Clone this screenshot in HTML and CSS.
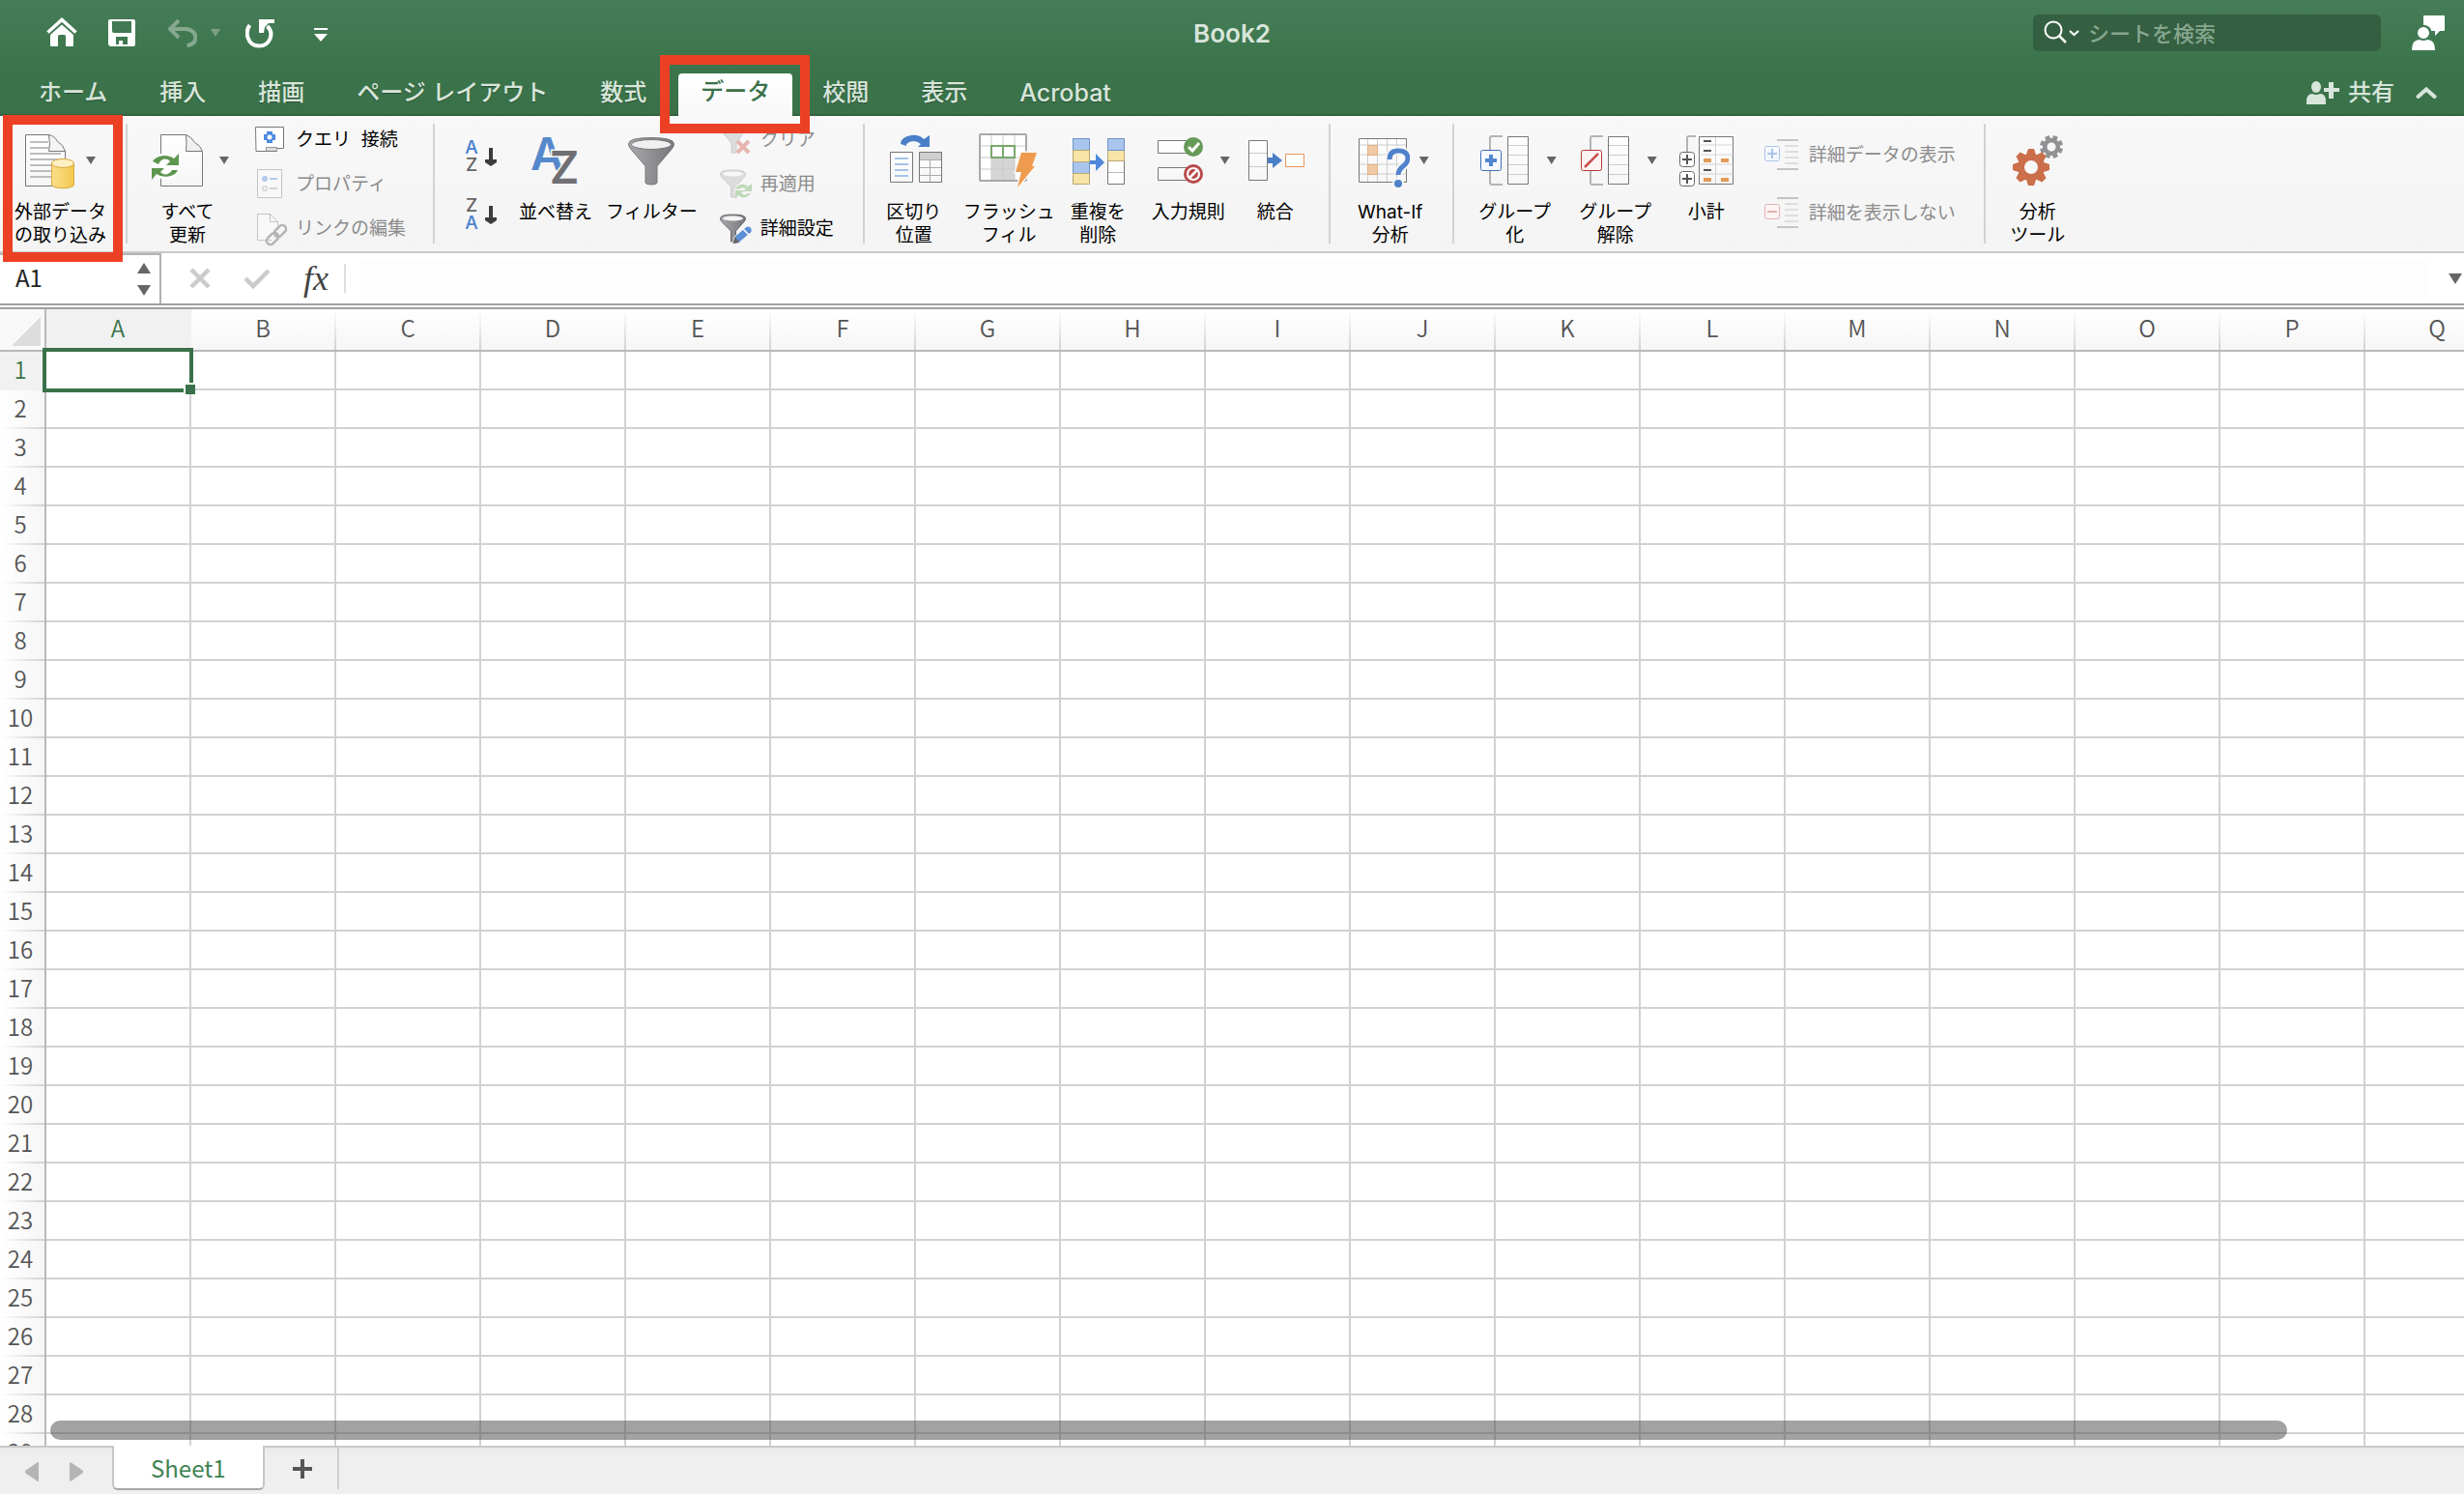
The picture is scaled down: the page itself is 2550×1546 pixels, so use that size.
FILE: index.html
```html
<!DOCTYPE html>
<html lang="ja">
<head>
<meta charset="utf-8">
<title>Book2</title>
<link rel="stylesheet" href="styles.css">
</head>
<body>
<svg class="defs" aria-hidden="true">
  <defs>
    <linearGradient id="paper" x1="0" y1="0" x2="0" y2="1"><stop offset="0" stop-color="#fff"/><stop offset="1" stop-color="#f6f6f6"/></linearGradient>
    <linearGradient id="gold" x1="0" y1="0" x2="1" y2="0"><stop offset="0" stop-color="#fbe08a"/><stop offset="1" stop-color="#f3c74f"/></linearGradient>
    <linearGradient id="metal" x1="0" y1="0" x2="1" y2="0"><stop offset="0" stop-color="#a9a9ad"/><stop offset="1" stop-color="#77777b"/></linearGradient>
  </defs>
</svg>

<header class="header">
  <div class="titlebar">
    <div class="quick">
      <button class="qbtn" aria-label="ホーム"><svg width="32" height="36" viewBox="48 16 32 36"><path d="M49.500 33.500 64 20.500l14.500 13" fill="none" stroke="#fff" stroke-width="3.600"/><path d="M64 25.500 76 36v11q0 1-1 1h-7V37.500q0-1.500-1.500-1.500h-5q-1.500 0-1.500 1.500V48h-7q-1 0-1-1V36z" fill="#fff"/></svg></button>
      <button class="qbtn m32" aria-label="保存"><svg width="28" height="36" viewBox="112 16 28 36"><path fill-rule="evenodd" fill="#fff" d="M114 20h24q2 0 2 2v24q0 2-2 2h-24l-2-2V22q0-2 2-2zm2 2v10q0 2 2 2h18V22zm4 16v8h3v-4h4v4h5v-8z"/></svg></button>
      <button class="qbtn m34" aria-label="元に戻す"><svg width="30" height="36" viewBox="174 16 30 36"><path d="M185 21 176 30l9 9M177 30h15q10 1 10.500 9-.5 7-9 8" fill="none" stroke="#86a88f" stroke-width="4"/></svg></button>
      <button class="qbtn m14" aria-label="元に戻すの一覧"><svg width="10" height="8" viewBox="0 0 10 8"><path d="M0 0h10L5 8z" fill="#7ba087"/></svg></button>
      <button class="qbtn m26" aria-label="やり直し"><svg width="32" height="36" viewBox="254 16 32 36"><path d="M258.500 26C253 33 256 47.500 268 47.500S284 34 276.500 27" fill="none" stroke="#fff" stroke-width="4"/><path d="M268 20h16v4h-6l-4 4-1 6h-5z" fill="#fff"/></svg></button>
      <button class="qbtn m38" aria-label="ツールバーのカスタマイズ"><svg width="16" height="36" viewBox="324 16 16 36"><path d="M325 29h14v2h-14zm0 6h14l-7 8z" fill="#fff"/></svg></button>
    </div>
    <h1 class="title">Book2</h1>
    <div class="title-right">
      <label class="search">
        <svg width="38" height="28" viewBox="2115 20 38 28"><circle cx="2125" cy="31" r="8.500" fill="none" stroke="#fff" stroke-width="2"/><path d="m2131 37 7 7" stroke="#fff" stroke-width="2.500"/><path d="m2142 32 4.500 4 4.500-4" fill="none" stroke="#fff" stroke-width="2.200"/></svg>
        <input type="search" placeholder="シートを検索" aria-label="シートを検索">
      </label>
      <button class="qbtn" aria-label="フィードバック"><svg width="34" height="36" viewBox="2496 16 34 36"><path d="M2509 16h20q1 0 1 1v14q0 1-1 1h-4l-5 5v-5h-4q0-5-8-6v-9q0-1 1-1z" fill="#fff"/><circle cx="2508" cy="34" r="7" fill="#fff" stroke="#417853" stroke-width="2"/><path d="M2496 52q0-11 8-11 4 2 8 0 8 0 8 11z" fill="#fff"/></svg></button>
    </div>
  </div>
  <nav class="tabs">
    <button class="tab">ホーム</button>
    <button class="tab">挿入</button>
    <button class="tab">描画</button>
    <button class="tab">ページ レイアウト</button>
    <button class="tab">数式</button>
    <span class="marked"><button class="tab active" aria-current="page">データ</button><i class="mark mark-tab"></i></span>
    <button class="tab">校閲</button>
    <button class="tab">表示</button>
    <button class="tab latin">Acrobat</button>
    <div class="tabs-right">
      <button class="share"><svg width="34" height="26" viewBox="2389 82 34 26"><ellipse cx="2399" cy="89" rx="5" ry="6" fill="#d8e5db"/><path d="M2389 107v-3q0-8 6-8 4 2 8 0 6 0 6 8v3zM2412 84h5v6h6v4h-6v7h-5v-7h-5v-4h5z" fill="#d8e5db"/></svg>共有</button>
      <button class="qbtn" aria-label="リボンを折りたたむ"><svg width="22" height="14" viewBox="0 0 22 14"><path d="m2.500 11 8.500-7.500 8.500 7.500" fill="none" stroke="#d8e5db" stroke-width="4" stroke-linecap="round"/></svg></button>
    </div>
  </nav>
</header>

<section class="ribbon" aria-label="データ">
  <div class="group g-import">
    <button class="big">
      <span class="pic"><svg width="53" height="60" viewBox="27 136 53 60"><path d="M27.500 139.500h24l17 17v36h-41z" fill="url(#paper)" stroke="#777"/><path d="M32 147h19m-19 6h19m-19 6h32m-32 6h32m-32 6h22m-22 6h22m-22 6h22" stroke="#bdbdbd" stroke-width="2"/><path d="M51.500 139.500q2 10 0 17h17q-2-7-8-10-3-6-9-7z" fill="#f4f4f4" stroke="#777"/><path d="M54.500 169v22c0 5 23 5 23 0v-22z" fill="url(#gold)" stroke="#d9a83a"/><ellipse cx="66" cy="169" rx="11.500" ry="4.500" fill="#fdf0c4" stroke="#d9a83a"/></svg><i class="caret"></i></span>
      <span>外部データ<br>の取り込み</span>
    </button>
    <i class="mark mark-import"></i>
  </div>

  <div class="group g-refresh">
    <button class="big">
      <span class="pic"><svg width="66" height="60" viewBox="151 136 66 60"><path d="M166.500 139.500h26l17 18v35h-43z" fill="url(#paper)" stroke="#777"/><path d="M192.500 139.500q1 9 0 17h17q-2-6-8-9-3-6-9-8z" fill="#f0f0f0" stroke="#777"/><circle cx="172" cy="172" r="14" fill="#fff"/><path d="M158 167a13 9 0 0 1 22-3l5-5v12h-13l4-4c-4-4-9-3-12 3zM184 176a13 9 0 0 1-22 4l-5 6v-12h13l-4 4c4 4 9 3 12-2z" fill="#5f9650"/></svg><i class="caret"></i></span>
      <span>すべて<br>更新</span>
    </button>
    <div class="col three m27">
      <button class="small"><svg width="33" height="46" viewBox="264 122 33 46"><path d="M264.500 131.500h29v22h-7v3h-21.500z" fill="#fff" stroke="#777"/><path d="M275.500 156v-3.500h11V156" fill="#ddd" stroke="#999"/><path d="M276 136h6v3h3v6h-3v3h-6v-3h-3v-6h3z" fill="#4f8ae0"/><circle cx="279" cy="142" r="2.500" fill="#fff"/></svg>クエリ&nbsp; 接続</button>
      <button class="small" disabled><svg width="33" height="46" viewBox="264 168 33 46"><path d="M266.500 175.500h25v29h-25z" fill="#f8f8f8" stroke="#c4c4c4"/><circle cx="274" cy="185" r="3" fill="#b3c9ea"/><path d="M279 185h8" stroke="#b3c9ea" stroke-width="2"/><circle cx="274" cy="195" r="2.200" fill="none" stroke="#d3d3d3" stroke-width="1.500"/><path d="M279 195h8" stroke="#d3d3d3" stroke-width="2"/></svg>プロパティ</button>
      <button class="small" disabled><svg width="33" height="46" viewBox="264 214 33 46"><path d="M281 248.500h-14.500v-27h13l8 8v4" fill="#f8f8f8" stroke="#c4c4c4"/><path d="M279.500 221.500v8h8" fill="none" stroke="#c4c4c4"/><g fill="none" stroke="#b4b4b4" stroke-width="2.500"><rect x="-7" y="-4" width="14" height="8" rx="4" transform="translate(290 239) rotate(-45)"/><rect x="-7" y="-4" width="14" height="8" rx="4" transform="translate(282 247) rotate(-45)"/></g></svg>リンクの編集</button>
    </div>
  </div>

  <div class="group g-sort">
    <div class="col two">
      <button class="icon-only" aria-label="昇順"><svg width="32" height="60" viewBox="482 130 32 60"><text x="488" y="158" class="az-s blue">A</text><text x="488" y="176" class="az-s">Z</text><path d="M506 152h4v12h4v3l-6 4-6-4v-3h4z" fill="#3c3c3c"/></svg></button>
      <button class="icon-only" aria-label="降順"><svg width="32" height="60" viewBox="482 190 32 60"><text x="488" y="218" class="az-s">Z</text><text x="488" y="236" class="az-s blue">A</text><path d="M506 212h4v12h4v3l-6 4-6-4v-3h4z" fill="#3c3c3c"/></svg></button>
    </div>
    <button class="big m23"><span class="pic"><svg width="54" height="60" viewBox="548 136 54 60"><text x="566" y="176" class="az-l blue" text-anchor="middle">A</text><text x="584" y="190" class="az-l halo" text-anchor="middle">Z</text></svg></span><span>並べ替え</span></button>
    <button class="big m14"><span class="pic"><svg width="50" height="60" viewBox="649 136 50 60"><path d="M650.500 149q0-6.500 23.500-6.500t23.500 6.500q0 3-3 6L680 172v17q0 2-6 2t-6-2v-17l-14.500-17q-3-3-3-6z" fill="url(#metal)" stroke="#77777b"/><ellipse cx="674" cy="149.500" rx="20.500" ry="5" fill="#f0f0f0" stroke="#77777b"/></svg></span><span>フィルター</span></button>
    <div class="col three m23">
      <button class="small" disabled><svg width="33" height="46" viewBox="745 122 33 46"><path d="M746 135q0-4 12.500-4t12.500 4l-9 13v10h-5v-10z" fill="#dcdcdc" stroke="#ccc"/><path d="m763 146 12 12m0-12-12 12" stroke="#e6b4b0" stroke-width="4"/></svg>クリア</button>
      <button class="small" disabled><svg width="33" height="46" viewBox="745 168 33 46"><path d="M745.500 180q0-4 13-4t13 4q0 2-2 4l-8 9v11h-5v-11l-9-9q-2-2-2-4z" fill="#dcdcdc" stroke="#ccc"/><ellipse cx="758.500" cy="180" rx="10.500" ry="2.500" fill="#f8f8f8"/><circle cx="769" cy="198" r="9" fill="#f5f5f5"/><path d="M761 195q7-8 13-2l4-3v8h-9l3-3q-4-2-8 1zM777 200q-7 8-13 2l-3 4v-9h9l-3 3q4 3 7 0z" fill="#c0d8b9"/></svg>再適用</button>
      <button class="small"><svg width="33" height="46" viewBox="745 214 33 46"><path d="M745.500 226q0-4 13-4t13 4q0 2-2 4l-8 9v11h-5v-11l-9-9q-2-2-2-4z" fill="url(#metal)" stroke="#68686c"/><ellipse cx="758.500" cy="226" rx="10.500" ry="2.500" fill="#f4f4f4"/><path d="m758 253 2-8 13-11q6 0 5 6l-13 11z" fill="#5b8fd6" stroke="#f5f5f5" stroke-width="1"/><path d="m758.500 252 2-7 5 6z" fill="#666"/><path d="m769 237 6 6" stroke="#fff" stroke-width="1.500"/></svg>詳細設定</button>
    </div>
  </div>

  <div class="group g-tools">
    <button class="big"><span class="pic"><svg width="58" height="60" viewBox="916 136 58 60"><path d="M931 149q0-7 11-9 8-1 13 4l6-4v12h-12l3-3q-8-6-15 0v2z" fill="#4a7fc8"/><path d="M920.500 157.500h23v31h-23z" fill="url(#paper)" stroke="#777"/><path d="M925 164h14m-14 6h14m-14 6h14m-14 6h14" stroke="#a4c3ea" stroke-width="2"/><path d="M950.500 157.500h23v31h-23z" fill="url(#paper)"/><path d="M950 157h24v8h-24z" fill="#cfcfd1"/><path d="M950.500 165.500h23m-23 8h23m-23 8h23m-12-16v23" stroke="#aaa"/><path d="M950.500 157.500h23v31h-23z" fill="none" stroke="#777"/></svg></span><span>区切り<br>位置</span></button>
    <button class="big m22"><span class="pic"><svg width="62" height="60" viewBox="1013 136 62 60"><path d="M1014 139h48v48h-48z" fill="#fff"/><path d="M1026 162h24v24h-24z" fill="#d5d5d5"/><path d="M1026 139v48m12-48v48m12-48v48m-36-36h48m-48 12h48m-48 12h48" stroke="#c8c8c8"/><rect x="1014" y="139" width="48" height="48" rx="1" fill="none" stroke="#a8a8a8" stroke-width="2"/><path d="M1026 151h24v12h-24zm12 0v12" fill="#fff" stroke="#7aa66c" stroke-width="2"/><path d="m1057 158h16l-5 14h3l-18 22 4-16h-6z" fill="#ef9b4e" stroke="#f7f7f7" stroke-width="3" paint-order="stroke"/></svg></span><span>フラッシュ<br>フィル</span></button>
    <button class="big m16"><span class="pic"><svg width="57" height="60" viewBox="1107 136 57 60"><path d="M1109.500 143.500h17v47h-17z" fill="#f7e4a6"/><path d="M1109.500 143.500h17v12h-17zm0 24h17v12h-17z" fill="#a9c5ee" stroke="#6d92c8"/><path d="M1109.500 155.500h17v12h-17zm0 24h17v11h-17z" fill="none" stroke="#b7a871"/><path d="M1145.500 143.500h17v47h-17z" fill="#fff" stroke="#777"/><path d="M1145.500 155.500h17v11h-17z" fill="#f7e4a6" stroke="#b7a871"/><path d="M1145.500 143.500h17v12h-17z" fill="#a9c5ee" stroke="#6d92c8"/><path d="M1146 178.500h16" stroke="#bbb"/><path d="M1127 166h6v-7l9 9-9 9v-7h-6z" fill="#4f88da"/></svg></span><span>重複を<br>削除</span></button>
    <button class="big m22"><span class="pic"><svg width="66" height="60" viewBox="1186 136 66 60"><path d="M1197.500 145.500h32v13h-32zm0 28h32v13h-32z" fill="url(#paper)" stroke="#777"/><circle cx="1234" cy="152" r="10" fill="#659a57"/><path d="m1229 152 4 4 7-8" fill="none" stroke="#fff" stroke-width="3"/><circle cx="1234" cy="180" r="10" fill="#b84a4a"/><circle cx="1234" cy="180" r="6" fill="none" stroke="#fff" stroke-width="2.200"/><path d="m1230 184 8-8" stroke="#fff" stroke-width="2.500"/></svg><i class="caret"></i></span><span>入力規則</span></button>
    <button class="big m17"><span class="pic"><svg width="60" height="60" viewBox="1289 136 60 60"><path d="M1291.500 145.500h19v41h-19z" fill="url(#paper)" stroke="#777"/><path d="M1292 158.500h18m-18 14h18" stroke="#ccc"/><path d="M1311 163h5v-5l10 8-10 8v-5h-5z" fill="#4a7fc8"/><path d="M1329.500 159.500h19v13h-19z" fill="#fff" stroke="#e8955a"/></svg></span><span>統合</span></button>
  </div>

  <div class="group g-whatif">
    <button class="big"><span class="pic"><svg width="60" height="60" viewBox="1398 136 60 60"><path d="M1405.500 143.500h49v45h-49z" fill="url(#paper)"/><path d="M1414.500 144v44m10-44v44m10-44v44m10-44v44m-39-38h49m-49 10h49m-49 10h49m-49 10h49" stroke="#ccc"/><path d="M1414.500 150.500h10v10h-10zm0 20h10v10h-10z" fill="#f0caa6" stroke="#e0b083"/><path d="M1405.500 143.500h49v45h-49z" fill="none" stroke="#777"/><path d="M1437 165q0-9 9-9 10 0 10 8 0 4-5 8t-5 9" fill="none" stroke="#f7f7f7" stroke-width="9"/><circle cx="1446" cy="190" r="6" fill="#f7f7f7"/><path d="M1437 165q0-9 9-9 10 0 10 8 0 4-5 8t-5 9" fill="none" stroke="#4f82cb" stroke-width="5"/><circle cx="1446" cy="190" r="4" fill="#4f82cb"/></svg><i class="caret"></i></span><span class="latin-label">What-If<br>分析</span></button>
  </div>

  <div class="group g-outline">
    <button class="big"><span class="pic"><svg width="66" height="60" viewBox="1524 136 66 60"><path d="M1554 141h-11q-2 0-2 2v46q0 2 2 2h11" fill="none" stroke="#b4b4b4" stroke-width="2"/><path d="M1559.500 141.500h21v49h-21z" fill="url(#paper)" stroke="#777"/><path d="M1560 150.500h20m-20 10h20m-20 10h20m-20 10h20" stroke="#ccc"/><rect x="1531.500" y="155.500" width="21" height="21" rx="2" fill="#f5f9ff" stroke="#3e70b8"/><path d="M1542 160v12m-6-6h12" stroke="#5286cf" stroke-width="4"/></svg><i class="caret"></i></span><span>グループ<br>化</span></button>
    <button class="big m18"><span class="pic"><svg width="66" height="60" viewBox="1628 136 66 60"><path d="M1658 141h-11q-2 0-2 2v46q0 2 2 2h11" fill="none" stroke="#b4b4b4" stroke-width="2"/><path d="M1663.500 141.500h21v49h-21z" fill="url(#paper)" stroke="#777"/><path d="M1664 150.500h20m-20 10h20m-20 10h20m-20 10h20" stroke="#ccc"/><rect x="1635.500" y="155.500" width="21" height="21" rx="2" fill="#fdf3f3" stroke="#b33a3a"/><path d="m1639 173 14-14" stroke="#c65252" stroke-width="2.500"/></svg><i class="caret"></i></span><span>グループ<br>解除</span></button>
    <button class="big m22"><span class="pic"><svg width="58" height="60" viewBox="1736 136 58 60"><path d="M1754 141h-7q-2 0-2 2v14" fill="none" stroke="#b4b4b4" stroke-width="2"/><path d="M1757.500 141.500h35v49h-35z" fill="url(#paper)" stroke="#777"/><path d="M1774.500 142v48m-17-40h35m-35 10h35m-35 10h35m-35 10h35" stroke="#d4d4d4"/><path d="M1762 146h8m-8 10h8m-8 20h8" stroke="#555" stroke-width="2"/><path d="M1762 166h8m10 0h8m-26 20h8m10 0h8" stroke="#e39a58" stroke-width="4"/><g fill="#fff" stroke="#666"><rect x="1737.500" y="157.500" width="15" height="15" rx="3"/><rect x="1737.500" y="177.500" width="15" height="15" rx="3"/></g><path d="M1745 160v10m-5-5h10m-5 15v10m-5-5h10" stroke="#555" stroke-width="2"/></svg></span><span>小計</span></button>
    <div class="col two m31">
      <button class="small wide" disabled><svg width="35" height="60" viewBox="1825 131 35 60"><path d="M1838 145h22m-22 30h22" stroke="#c4c4c4" stroke-width="2"/><path d="M1846 151h14m-14 6h14m-14 6h14m-14 6h14" stroke="#dedede" stroke-width="2"/><rect x="1825.500" y="151.500" width="15" height="15" rx="2" fill="#f4f8fd" stroke="#a9c4ea"/><path d="M1833 154v10m-5-5h10" stroke="#a9c4ea" stroke-width="2"/></svg>詳細データの表示</button>
      <button class="small wide" disabled><svg width="35" height="60" viewBox="1825 191 35 60"><path d="M1838 205h22m-22 30h22" stroke="#c4c4c4" stroke-width="2"/><path d="M1846 211h14m-14 6h14m-14 6h14m-14 6h14" stroke="#dedede" stroke-width="2"/><rect x="1825.500" y="211.500" width="15" height="15" rx="2" fill="#fdf4f4" stroke="#e3b0b0"/><path d="M1828 219h10" stroke="#e3b0b0" stroke-width="2"/></svg>詳細を表示しない</button>
    </div>
  </div>

  <div class="group g-analysis">
    <button class="big"><span class="pic"><svg width="58" height="60" viewBox="2079 136 58 60">
      <g transform="translate(2122 152) rotate(22)" fill="#929295"><circle r="9"/><path d="M-2.500-12h5v24h-5zM-12-2.500h24v5h-24z"/><path d="M-2.500-12h5v24h-5zM-12-2.500h24v5h-24z" transform="rotate(45)"/><circle r="4.500" fill="#f7f7f7"/></g>
      <g transform="translate(2101 173)" fill="#cb6e4a"><circle r="14"/><path d="M-3-19h6l2 6v26l-2 6h-6l-2-6v-26zM-19-3l6-2h26l6 2v6l-6 2h-26l-6-2z"/><path d="M-3-19h6l2 6v26l-2 6h-6l-2-6v-26zM-19-3l6-2h26l6 2v6l-6 2h-26l-6-2z" transform="rotate(45)"/><circle r="7" fill="#f7f7f7"/></g></svg></span><span>分析<br>ツール</span></button>
  </div>
</section>

<section class="formula">
  <div class="namebox">
    <input type="text" value="A1" aria-label="名前ボックス">
    <svg width="14" height="36" viewBox="0 0 14 36"><path d="M7 1l7 11H0zM7 35l7-11H0z" fill="#666"/></svg>
  </div>
  <button class="fbtn m29" aria-label="キャンセル"><svg width="22" height="24" viewBox="0 0 22 24"><path d="m2 3 18 18m0-18L2 21" stroke="#cbcbcb" stroke-width="4.500"/></svg></button>
  <button class="fbtn m34" aria-label="入力"><svg width="28" height="24" viewBox="0 0 28 24"><path d="m2 12 8 8L26 4" fill="none" stroke="#cbcbcb" stroke-width="4.500"/></svg></button>
  <button class="fbtn fx m34" aria-label="関数の挿入">fx</button>
  <input class="fx-input" type="text" aria-label="数式バー">
  <button class="fbtn expand" aria-label="数式バーの展開"><svg width="14" height="11" viewBox="0 0 14 11"><path d="M0 0h14L7 11z" fill="#666"/></svg></button>
</section>

<main class="sheet">
  <table class="grid">
    <thead><tr id="columns"><th class="corner" aria-label="すべて選択"><svg width="30" height="30" viewBox="0 0 30 30"><path d="M30 0v30H0z" fill="#dcdcdc"/></svg></th></tr></thead>
    <tbody id="rows"></tbody>
  </table>
  <div class="scrollbar"></div>
</main>

<footer class="footer">
  <button class="nav-btn" aria-label="前のシート"><svg width="14" height="20" viewBox="0 0 14 20"><path d="M14 1v18q0 1-1 1L0 11V9L13 0q1 0 1 1z" fill="#b5b5b5"/></svg></button>
  <button class="nav-btn m32" aria-label="次のシート"><svg width="14" height="20" viewBox="0 0 14 20"><path d="M0 1v18q0 1 1 1l13-9V9L1 0Q0 0 0 1z" fill="#b5b5b5"/></svg></button>
  <button class="sheet-tab">Sheet1</button>
  <button class="add" aria-label="シートの追加"><svg width="20" height="20" viewBox="0 0 20 20"><path d="M10 0v20M0 10h20" stroke="#555" stroke-width="4"/></svg></button>
</footer>
<script src="grid.js"></script>
</body>
</html>
```
FILE: styles.css
```css
*, *::before, *::after { box-sizing: border-box; }
html, body { height: 100%; }
body {
  margin: 0;
  display: flex;
  flex-direction: column;
  overflow: hidden;
  background: #fff;
  color: #000;
  font-family: Inter, "Noto Sans CJK JP", sans-serif;
  font-size: 19px;
}
button, input {
  font: inherit;
  color: inherit;
  border: 0;
  margin: 0;
  padding: 0;
  background: none;
  outline: 0;
}
svg { display: block; flex: none; }
.defs { position: absolute; width: 0; height: 0; }

/* spacing steps between neighbouring controls */
.m14 { margin-left: 14px; }
.m16 { margin-left: 16px; }
.m17 { margin-left: 17px; }
.m18 { margin-left: 18px; }
.m22 { margin-left: 22px; }
.m23 { margin-left: 23px; }
.m26 { margin-left: 26px; }
.m27 { margin-left: 27px; }
.m29 { margin-left: 29px; }
.m31 { margin-left: 31px; }
.m32 { margin-left: 32px; }
.m34 { margin-left: 34px; }
.m38 { margin-left: 38px; }

/* title bar and tabs */
.header {
  flex: none;
  background: linear-gradient(#467d58, #3b744a 60%, #3a7149);
  border-bottom: 2px solid #32613f;
  color: #d8e5db;
}
.titlebar {
  height: 68px;
  display: grid;
  grid-template-columns: 1fr auto 1fr;
  align-items: center;
}
.quick { display: flex; align-items: center; padding-left: 48px; }
.qbtn { display: flex; align-items: center; }
.title { margin: 0; padding-top: 2px; font-size: 26px; line-height: 32px; font-weight: 600; }
.title-right {
  display: flex;
  align-items: center;
  justify-content: flex-end;
  gap: 32px;
  padding-right: 20px;
}
.search {
  width: 360px;
  height: 38px;
  display: flex;
  align-items: center;
  gap: 8px;
  padding-left: 11px;
  border-radius: 6px;
  background: #345f40;
}
.search input { flex: 1; min-width: 0; padding-top: 2px; font-size: 22px; font-weight: 500; }
.search input::placeholder { color: #86a68f; opacity: 1; }
.tabs {
  height: 50px;
  display: flex;
  align-items: flex-end;
  padding: 0 28px 0 13px;
}
.tab {
  height: 42px;
  padding: 1px 27px 3px;
  font-size: 24px;
  line-height: 38px;
  font-weight: 500;
  white-space: nowrap;
  text-shadow: 0 1px 1px rgba(0, 0, 0, .3);
}
.tab.latin { font-size: 25px; }
.marked { position: relative; display: flex; margin: 0 4px 0 6px; }
.tab.active {
  height: 44px;
  margin-bottom: -2px;
  padding: 0 23px 6px;
  border-radius: 4px 4px 0 0;
  background: linear-gradient(#fff, #f8f8f8);
  color: #3a7149;
  text-shadow: none;
}
.tabs-right { display: flex; align-items: center; gap: 22px; height: 42px; padding-bottom: 3px; margin-left: auto; }
.share { display: flex; align-items: center; gap: 9px; font-size: 24px; line-height: 38px; font-weight: 500; }

/* red call-out frames laid over the controls */
.mark { position: absolute; z-index: 5; border: 10px solid #ec4025; pointer-events: none; }
.mark-tab { left: -19px; right: -18px; top: -19px; bottom: -20px; }
.mark-import { left: 3px; right: 5px; top: -1px; bottom: -11px; }

/* ribbon */
.ribbon {
  flex: none;
  height: 142px;
  display: flex;
  background: linear-gradient(#f8f8f8, #f4f4f4);
  border-bottom: 2px solid #c9c9c9;
  white-space: nowrap;
}
.group { position: relative; display: flex; height: 140px; }
.group:not(:last-child)::after {
  content: "";
  width: 2px;
  height: 124px;
  margin-top: 8px;
  background: #d2d2d2;
}
.g-import { padding-left: 15px; }
.g-import::after { margin-left: 20px; }
.g-refresh { padding-left: 19px; }
.g-refresh::after { margin-left: 30px; }
.g-sort { padding-left: 32px; }
.g-sort::after { margin-left: 29px; }
.g-tools { padding-left: 22px; }
.g-tools::after { margin-left: 25px; }
.g-whatif { padding-left: 22px; }
.g-whatif::after { margin-left: 24px; }
.g-outline { padding-left: 20px; }
.g-outline::after { margin-left: 29px; }
.g-analysis { padding-left: 25px; }
.col.three { width: 156px; }
.g-sort .col.three { width: 119px; }
.g-refresh::after { margin-left: 28px; }
.big {
  display: flex;
  flex-direction: column;
  align-items: center;
  padding-top: 16px;
  line-height: 24px;
  text-align: center;
}
.pic { display: flex; align-items: center; gap: 10px; height: 60px; margin-bottom: 12px; }
.latin-label { font-size: 19px; }
.caret { width: 10px; height: 8px; background: #666; clip-path: polygon(0 0, 100% 0, 50% 100%); }
.col { display: flex; flex-direction: column; }
.three { padding-top: 2px; }
.two { padding-top: 11px; }
.small { display: flex; align-items: center; gap: 9px; line-height: 24px; }
.small.wide { gap: 11px; }
.small:disabled { color: #8b8b8b; }
.az-s { font: 500 19px Inter, sans-serif; fill: #666; text-anchor: middle; }
.az-l { font: 600 47px Inter, sans-serif; fill: #6f6f74; }
.az-s.blue { fill: #4a80d0; }
.az-l.blue { fill: #5688cc; }
.halo { stroke: #f7f7f7; stroke-width: 3px; paint-order: stroke; }

/* formula bar */
.formula {
  flex: none;
  height: 58px;
  display: flex;
  align-items: center;
  border-bottom: 6px double #a0a0a3;
  background: #fff;
}
.namebox {
  width: 167px;
  height: 52px;
  display: flex;
  align-items: center;
  padding: 0 9px 0 16px;
  border: 2px solid #b2b2b2;
  border-width: 2px 2px 0 0;
  color: #222;
  font: 24px "Noto Sans CJK JP", sans-serif;
}
.namebox input { flex: 1; min-width: 0; padding-bottom: 6px; }
.fx { width: 44px; height: 30px; border-right: 2px solid #dedede; text-align: left; color: #444; font: italic 36px/26px "Liberation Serif", serif; }
.fx-input { flex: 1; height: 38px; margin-left: 14px; background: #fdfdfd; font-size: 22px; }
.expand { margin: 0 2px 0 22px; }

/* worksheet */
.sheet { position: relative; flex: 1; min-height: 0; overflow: hidden; }
.grid {
  width: 2598px;
  table-layout: fixed;
  border-spacing: 0;
  color: #555;
  font: 24px "Noto Sans CJK JP", sans-serif;
}
.grid th, .grid td { padding: 0 2px 4px 0; font-weight: 350; line-height: 34px; }
.grid thead th {
  height: 44px;
  border-bottom: 2px solid #b9b9b9;
  background: linear-gradient(#fff, #d2d2d2) right / 2px 100% no-repeat, linear-gradient(#fff, #f6f6f6);
}
.grid thead .corner { width: 48px; padding: 0; border-right: 2px solid #b9b9b9; background: #f9f9f9; }
.corner svg { margin: 4px 0 0 12px; }
.grid tbody th {
  height: 40px;
  padding-right: 4px;
  border-right: 2px solid #b9b9b9;
  background: linear-gradient(90deg, #fff, #d2d2d2) bottom / 100% 2px no-repeat, linear-gradient(90deg, #fff, #f6f6f6);
}
.grid td { height: 40px; border: 2px solid #d2d2d2; border-width: 0 2px 2px 0; }
.grid thead th.on, .grid tbody th.on { background: #f1f1f1; color: #3a7149; }
.grid td.selected { position: relative; }
.selected::before {
  content: "";
  position: absolute;
  left: -4px;
  top: -4px;
  width: 156px;
  height: 46px;
  border: 4px solid #3a7149;
}
.selected::after {
  content: "";
  position: absolute;
  left: 142px;
  top: 32px;
  width: 12px;
  height: 12px;
  border: 2px solid #fff;
  border-width: 2px 0 0 2px;
  background: #3a7149;
}
.scrollbar {
  position: absolute;
  left: 52px;
  right: 183px;
  bottom: 6px;
  height: 20px;
  border-radius: 10px;
  background: rgba(70, 70, 70, .5);
}

/* sheet tabs */
.footer {
  flex: none;
  height: 50px;
  display: flex;
  align-items: flex-start;
  padding-left: 26px;
  border-top: 2px solid #c9c9c9;
  background: linear-gradient(#e9e9e9, #efefef 20%);
}
.nav-btn { padding-top: 15px; }
.sheet-tab {
  position: relative;
  height: 46px;
  margin: -2px 0 0 30px;
  padding: 2px 38px 0;
  border: 2px solid #c6c6c6;
  border-top: 0;
  border-bottom-color: #a6a6a6;
  border-radius: 0 0 6px 6px;
  background: #fff;
  color: #3f8253;
  font: 24px/36px "Noto Sans CJK JP", sans-serif;
}
.add { height: 43px; padding: 0 26px 0 29px; border-right: 2px solid #cfcfcf; }
```
FILE: grid.js
```js
// Builds the column headings and the numbered empty rows.
const letters = "ABCDEFGHIJKLMNOPQ".split("");
const head = document.getElementById("columns");
const body = document.getElementById("rows");

letters.forEach((letter, i) => {
  const th = document.createElement("th");
  th.textContent = letter;
  if (i === 0) th.className = "on";
  head.append(th);
});

for (let n = 1; n <= 29; n++) {
  const tr = document.createElement("tr");
  const th = document.createElement("th");
  th.textContent = n;
  if (n === 1) th.className = "on";
  tr.append(th);
  letters.forEach((_, i) => {
    const td = document.createElement("td");
    if (n === 1 && i === 0) td.className = "selected";
    tr.append(td);
  });
  body.append(tr);
}
```
